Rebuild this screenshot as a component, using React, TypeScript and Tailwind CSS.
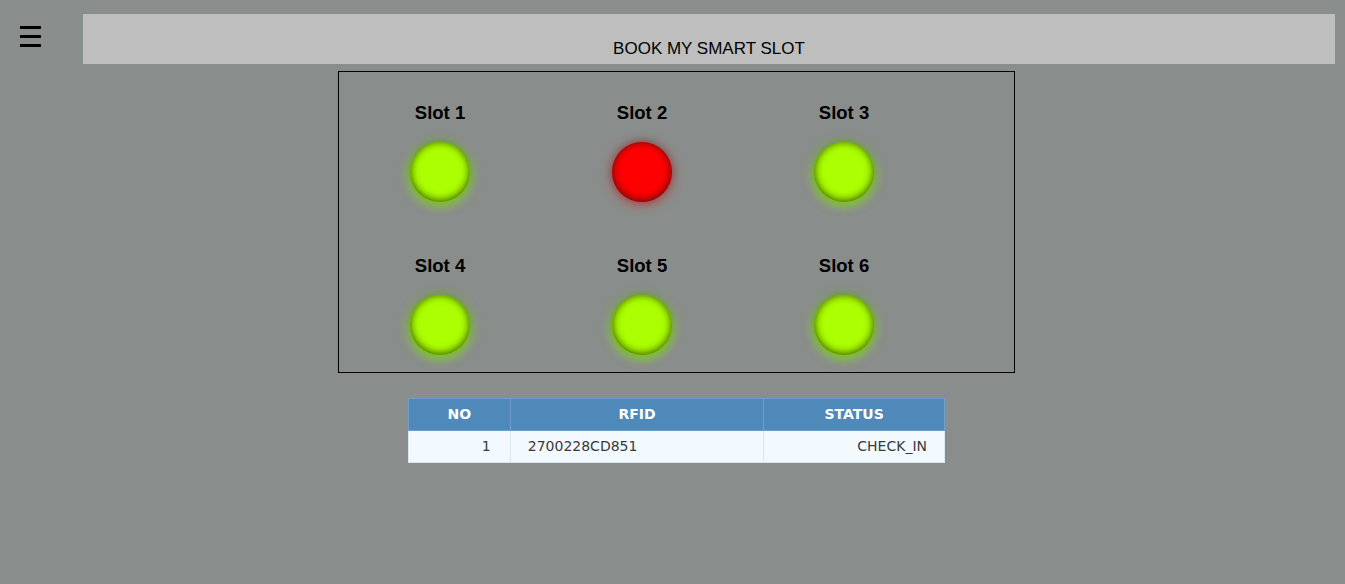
import React from 'react';

type Slot = { name: string; busy: boolean };

const slots: Slot[] = [
  { name: 'Slot 1', busy: false },
  { name: 'Slot 2', busy: true },
  { name: 'Slot 3', busy: false },
  { name: 'Slot 4', busy: false },
  { name: 'Slot 5', busy: false },
  { name: 'Slot 6', busy: false },
];

const rows = [{ no: 1, rfid: '2700228CD851', status: 'CHECK_IN' }];

function Led({ busy }: { busy: boolean }) {
  return busy ? (
    <div className="h-[60px] w-[60px] rounded-full bg-[#ff0000] shadow-[0_-1px_7px_1px_rgba(0,0,0,0.2),inset_0_-1px_9px_#441313,0_2px_12px_rgba(255,0,0,0.5)]" />
  ) : (
    <div className="h-[60px] w-[60px] rounded-full bg-[#abff00] shadow-[0_-1px_7px_1px_rgba(0,0,0,0.2),inset_0_-1px_9px_#304701,0_2px_12px_#89ff00]" />
  );
}

export default function App() {
  return (
    <div className="min-h-[584px] bg-[#898d8b] font-['Liberation_Sans',Arial,sans-serif]">
      <div className="flex pt-[14px]">
        <div className="ml-[20px] mt-[12px] flex w-[21px] flex-col gap-[6px]">
          <span className="h-[3px] bg-black" />
          <span className="h-[3px] bg-black" />
          <span className="h-[3px] bg-black" />
        </div>
        <div className="ml-[42px] mr-[10px] h-[50px] flex-1 bg-[#bebebf] pt-[25px] text-center text-[17px] leading-[19px] text-black">
          BOOK MY SMART SLOT
        </div>
      </div>

      <div className="ml-[338px] mt-[7px] w-[677px] border border-black pb-[17px] pt-[30px]">
        <div className="grid w-[606px] grid-cols-3 gap-y-[53px]">
          {slots.map((s) => (
            <div key={s.name} className="flex flex-col items-center">
              <div className="h-[21px] text-[18.5px] font-bold leading-[21px] text-black">{s.name}</div>
              <div className="mt-[19px]">
                <Led busy={s.busy} />
              </div>
            </div>
          ))}
        </div>
      </div>

      <table className="ml-[408px] mt-[25px] w-[537px] border-collapse border border-[#c9daee] font-['DejaVu_Sans',Verdana,sans-serif] text-[14px]">
        <thead>
          <tr className="h-[32px] bg-[#4f89ba] text-white">
            <th className="w-[102px] border border-[#6c9fcd] font-bold">NO</th>
            <th className="w-[254px] border border-[#6c9fcd] font-bold">RFID</th>
            <th className="w-[181px] border border-[#6c9fcd] font-bold">STATUS</th>
          </tr>
        </thead>
        <tbody>
          {rows.map((r) => (
            <tr key={r.no} className="h-[32px] bg-[#f2f9ff] font-normal text-[#3a3a3a]">
              <td className="border border-[#dbe6f5] pr-[19px] text-right">{r.no}</td>
              <td className="border border-[#dbe6f5] pl-[17px] text-left">{r.rfid}</td>
              <td className="border border-[#dbe6f5] pr-[17px] text-right">{r.status}</td>
            </tr>
          ))}
        </tbody>
      </table>
    </div>
  );
}
